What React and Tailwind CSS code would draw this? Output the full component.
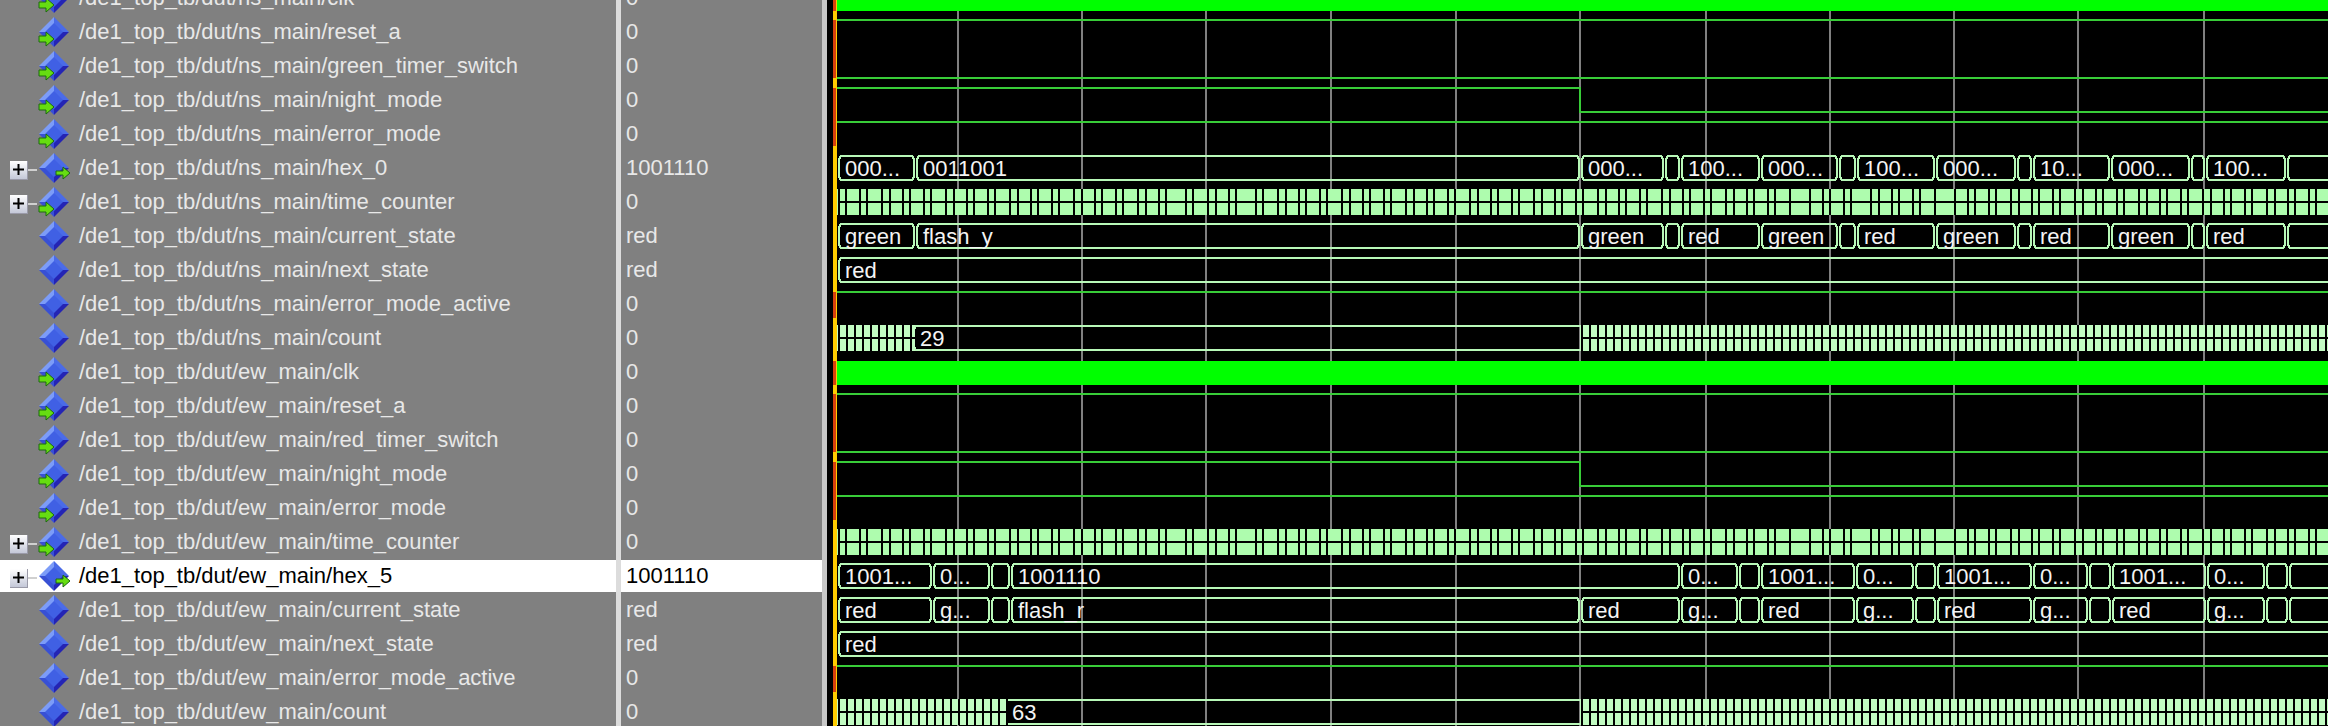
const W0 = 837
const END = 2340
const GRID = [958, 1082, 1206, 1331, 1456, 1580, 1706, 1830, 1954, 2078, 2204]
const LIGHT = '#b8f8b8'
const GREEN = '#38cc38'

const rowY = (k) => -2 + 34 * k

// k is the row index, first row (clk) is partly cut off by the top of the window
const signals = [
  { name: '/de1_top_tb/dut/ns_main/clk', value: '0', arrow: 'in' },
  { name: '/de1_top_tb/dut/ns_main/reset_a', value: '0', arrow: 'in' },
  { name: '/de1_top_tb/dut/ns_main/green_timer_switch', value: '0', arrow: 'in' },
  { name: '/de1_top_tb/dut/ns_main/night_mode', value: '0', arrow: 'in' },
  { name: '/de1_top_tb/dut/ns_main/error_mode', value: '0', arrow: 'in' },
  { name: '/de1_top_tb/dut/ns_main/hex_0', value: '1001110', arrow: 'out', plus: true },
  { name: '/de1_top_tb/dut/ns_main/time_counter', value: '0', arrow: 'in', plus: true },
  { name: '/de1_top_tb/dut/ns_main/current_state', value: 'red' },
  { name: '/de1_top_tb/dut/ns_main/next_state', value: 'red' },
  { name: '/de1_top_tb/dut/ns_main/error_mode_active', value: '0' },
  { name: '/de1_top_tb/dut/ns_main/count', value: '0' },
  { name: '/de1_top_tb/dut/ew_main/clk', value: '0', arrow: 'in' },
  { name: '/de1_top_tb/dut/ew_main/reset_a', value: '0', arrow: 'in' },
  { name: '/de1_top_tb/dut/ew_main/red_timer_switch', value: '0', arrow: 'in' },
  { name: '/de1_top_tb/dut/ew_main/night_mode', value: '0', arrow: 'in' },
  { name: '/de1_top_tb/dut/ew_main/error_mode', value: '0', arrow: 'in' },
  { name: '/de1_top_tb/dut/ew_main/time_counter', value: '0', arrow: 'in', plus: true },
  { name: '/de1_top_tb/dut/ew_main/hex_5', value: '1001110', arrow: 'out', plus: true, selected: true },
  { name: '/de1_top_tb/dut/ew_main/current_state', value: 'red' },
  { name: '/de1_top_tb/dut/ew_main/next_state', value: 'red' },
  { name: '/de1_top_tb/dut/ew_main/error_mode_active', value: '0' },
  { name: '/de1_top_tb/dut/ew_main/count', value: '0' },
]

const nsEdges = [1580, 1664, 1680, 1760, 1838, 1856, 1935, 2016, 2032, 2110, 2190, 2205, 2286, END]
const ewEdges = [1680, 1738, 1760, 1855, 1914, 1936, 2032, 2088, 2111, 2206, 2265, 2288, END]

function segments(edges, labels) {
  return edges.slice(0, -1).map((x, i) => ({ x0: x, x1: edges[i + 1], label: labels[i % labels.length] }))
}

const buses = {
  5: [
    { x0: W0, x1: 915, label: '000...' },
    { x0: 915, x1: 1580, label: '0011001' },
    ...segments(nsEdges, ['000...', '', '100...', '000...', '', '100...', '000...', '', '10...', '000...', '', '100...', '']),
  ],
  7: [
    { x0: W0, x1: 915, label: 'green' },
    { x0: 915, x1: 1580, label: 'flash_y' },
    ...segments(nsEdges, ['green', '', 'red', 'green', '', 'red', 'green', '', 'red', 'green', '', 'red', '']),
  ],
  8: [{ x0: W0, x1: END, label: 'red' }],
  10: [{ x0: 912, x1: 1586, label: '29' }],
  17: [
    { x0: W0, x1: 932, label: '1001...' },
    { x0: 932, x1: 990, label: '0...' },
    { x0: 990, x1: 1010, label: '' },
    { x0: 1010, x1: 1680, label: '1001110' },
    ...segments(ewEdges, ['0...', '', '1001...', '0...', '', '1001...', '0...', '', '1001...', '0...', '', '']),
  ],
  18: [
    { x0: W0, x1: 932, label: 'red' },
    { x0: 932, x1: 990, label: 'g...' },
    { x0: 990, x1: 1010, label: '' },
    { x0: 1010, x1: 1580, label: 'flash_r' },
    { x0: 1580, x1: 1680, label: 'red' },
    ...segments(ewEdges, ['g...', '', 'red', 'g...', '', 'red', 'g...', '', 'red', 'g...', '', '']),
  ],
  19: [{ x0: W0, x1: END, label: 'red' }],
  21: [{ x0: 1004, x1: 1586, label: '63' }],
}

// digital rows: [k, level], level -1 is high and 1 is low
const digital = [
  [1, -1], [2, 1], [4, -1], [9, -1], [12, -1], [13, 1], [15, -1], [20, -1],
]

// x position of the dark slits in a packed bus
function denseSlits(x0, x1, pattern, wide = []) {
  const out = []
  let x = x0 + 1
  let i = 0
  while (x < x1) {
    out.push(x)
    const step = pattern[i % pattern.length]
    const w = wide.find((v) => x <= v && x + step > v)
    x += w ? 20 : step
    i++
  }
  return out
}

function DenseBus({ k, x0, x1, pattern, wide, fill }) {
  const c = rowY(k)
  const slits = denseSlits(x0, x1, pattern, wide)
  let d = ''
  slits.forEach((x, i) => {
    d += `M${x} ${c - 13}h2v26h-2z`
    const next = slits[i + 1] ?? x1
    d += `M${x + 2} ${c - 1}h${next - x - 2}v2h-${next - x - 2}z`
  })
  return (
    <g>
      <rect x={x0} y={c - 13} width={x1 - x0} height={26} fill={fill} />
      <path d={d} fill="#000" />
    </g>
  )
}

function BusSegment({ k, x0, x1, label }) {
  const c = rowY(k)
  const d = `M${x0 + 4} ${c - 12}H${x1 - 3}L${x1 - 1} ${c - 9}V${c + 9}L${x1 - 3} ${c + 12}H${x0 + 4}L${x0 + 2} ${c + 9}V${c - 9}Z`
  return (
    <g>
      <path d={d} fill="none" stroke={LIGHT} strokeWidth="2" />
      {label && (
        <text x={x0 + 8} y={c + 8} fontSize="22" fill="#f4f4f4" fontFamily="'Liberation Sans', sans-serif">
          {label}
        </text>
      )}
    </g>
  )
}

function Waves() {
  const redBars = [[0, 11], [20, 78], [88, 146], [292, 318], [361, 385], [394, 452], [462, 520], [666, 692]]
  const timeWide = [1173, 1247, 1790, 1863, 1937]
  return (
    <svg width="1495" height="726" viewBox="833 0 1495 726" className="block" shapeRendering="crispEdges">
      {GRID.map((x) => (
        <rect key={x} x={x - 1} y="0" width="2" height="726" fill="#808080" />
      ))}

      {/* clocks show as a solid band at this zoom */}
      <rect x={W0} y="-12" width="1500" height="23" fill="#00ff00" />
      <rect x={W0} y="361" width="1500" height="24" fill="#00ff00" />

      {digital.map(([k, level]) => (
        <rect key={k} x={W0} y={rowY(k) + 12 * level - 1} width="1500" height="2" fill={GREEN} />
      ))}
      <path d="M837 87H1581V111H2328V113H1579V89H837Z" fill={GREEN} />
      <path d="M837 461H1581V485H2328V487H1579V463H837Z" fill={GREEN} />

      {Object.entries(buses).map(([k, segs]) =>
        segs.map((s, i) => <BusSegment key={`${k}-${i}`} k={Number(k)} {...s} />)
      )}

      <DenseBus k={6} x0={W0} x1={2328} pattern={[7, 14, 7, 15, 8, 13]} wide={timeWide} fill="#aefcae" />
      <DenseBus k={16} x0={W0} x1={2328} pattern={[7, 14, 7, 15, 8, 13]} wide={timeWide} fill="#aefcae" />
      <DenseBus k={10} x0={W0} x1={915} pattern={[8]} fill="#c2fcc2" />
      <DenseBus k={10} x0={1580} x1={2328} pattern={[8]} fill="#c2fcc2" />
      <DenseBus k={21} x0={W0} x1={1007} pattern={[8]} fill="#c2fcc2" />
      <DenseBus k={21} x0={1580} x1={2328} pattern={[8]} fill="#c2fcc2" />

      {/* cursor at time zero, red where the signal starts out unknown */}
      <rect x="833" y="0" width="4" height="726" fill="#ffcc00" />
      {redBars.map(([a, b]) => (
        <rect key={a} x="833" y={a} width="3" height={b - a} fill="#d8400c" />
      ))}
    </svg>
  )
}

function SignalIcon({ arrow }) {
  return (
    <svg width="34" height="34" viewBox="0 0 34 34" className="shrink-0">
      <path d="M17 2L32 17L17 17Z" fill="#4a6be8" />
      <path d="M17 2L2 17L17 17Z" fill="#7c9cf8" />
      <path d="M2 17L17 32L17 17Z" fill="#3850d4" />
      <path d="M32 17L17 32L17 17Z" fill="#2424b4" />
      <path d="M17 8L26 17L17 26L8 17Z" fill="#4060e4" />
      {arrow === 'in' && (
        <path d="M2 21H9V17L17 24L9 31V27H2Z" fill="#66dd11" stroke="#1c6a10" strokeWidth="1" />
      )}
      {arrow === 'out' && (
        <path d="M19 20H26V16L33 22L26 28V24H19Z" fill="#66dd11" stroke="#1c6a10" strokeWidth="1" />
      )}
    </svg>
  )
}

function PlusBox() {
  return (
    <div className="flex items-center mt-1 ml-[10px]">
      <div className="w-[19px] h-[19px] flex items-center justify-center bg-gradient-to-b from-white to-[#c4c8d8] border-b border-r border-[#9a9aa8]">
        <svg width="11" height="11" viewBox="0 0 11 11">
          <path d="M4.5 0h2v4.5H11v2H6.5V11h-2V6.5H0v-2h4.5z" fill="#000" />
        </svg>
      </div>
      <div className="w-[10px] h-[2px] bg-[#d0d0d0]" />
    </div>
  )
}

function NameRow({ s }) {
  return (
    <div className="h-[34px] py-px">
      <div className={`h-full flex items-center ${s.selected ? 'bg-white text-black' : 'text-[#e8e8e8]'}`}>
        <div className="w-[37px] shrink-0">{s.plus && <PlusBox />}</div>
        <SignalIcon arrow={s.arrow} />
        <span className="ml-2 pb-[2px] whitespace-nowrap">{s.name}</span>
      </div>
    </div>
  )
}

function ValueRow({ s }) {
  return (
    <div className="h-[34px] py-px">
      <div className={`h-full flex items-center pl-[5px] pb-[2px] ${s.selected ? 'bg-white text-black' : 'text-[#e8e8e8]'}`}>
        {s.value}
      </div>
    </div>
  )
}

export default function App() {
  return (
    <div className="w-[2328px] h-[726px] overflow-hidden flex bg-black text-[22px] font-['Liberation_Sans',sans-serif]">
      <div className="w-[616px] shrink-0 bg-[#808080] overflow-hidden">
        <div className="-mt-[19px]">
          {signals.map((s) => (
            <NameRow key={s.name} s={s} />
          ))}
        </div>
      </div>
      <div className="w-[5px] shrink-0 bg-[#dcdcdc]" />
      <div className="w-[201px] shrink-0 bg-[#808080] overflow-hidden">
        <div className="-mt-[19px]">
          {signals.map((s) => (
            <ValueRow key={s.name} s={s} />
          ))}
        </div>
      </div>
      <div className="w-[5px] shrink-0 bg-[#c8c8c8]" />
      <div className="w-[6px] shrink-0" />
      <Waves />
    </div>
  )
}
